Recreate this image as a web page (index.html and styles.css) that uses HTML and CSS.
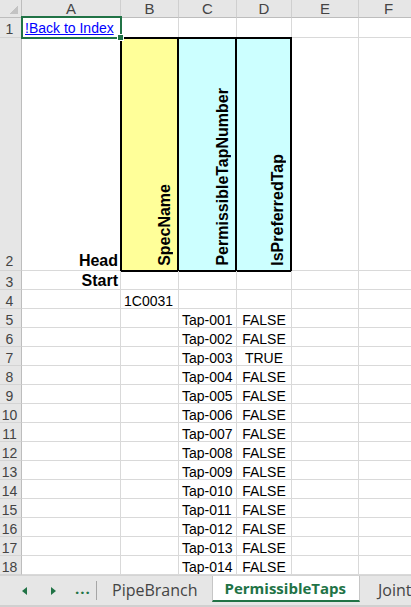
FILE: index.html
```html
<!DOCTYPE html>
<html lang="en">
<head>
  <meta charset="UTF-8">
  <meta name="viewport" content="width=device-width, initial-scale=1.0">
  <title>PermissibleTaps</title>
  <link rel="stylesheet" href="styles.css">
</head>
<body>
  <div class="sheet" id="sheet">
    <div class="corner"><span class="tri"></span></div>
    <div class="colhead">A</div>
    <div class="colhead">B</div>
    <div class="colhead">C</div>
    <div class="colhead">D</div>
    <div class="colhead">E</div>
    <div class="colhead">F</div>

    <div class="rowhead">1</div>
    <div class="cell selected"><a href="#">!Back to Index</a></div>
    <div class="cell"></div>
    <div class="cell"></div>
    <div class="cell"></div>
    <div class="cell"></div>
    <div class="cell"></div>

    <div class="rowhead bottom">2</div>
    <div class="cell label bottom">Head</div>
    <div class="cell hdr first yellow"><span class="vert">SpecName</span></div>
    <div class="cell hdr cyan"><span class="vert">PermissibleTapNumber</span></div>
    <div class="cell hdr cyan"><span class="vert">IsPreferredTap</span></div>
    <div class="cell"></div>
    <div class="cell"></div>

    <div class="rowhead">3</div>
    <div class="cell label">Start</div>
    <div class="cell"></div>
    <div class="cell"></div>
    <div class="cell"></div>
    <div class="cell"></div>
    <div class="cell"></div>

    <div class="rowhead">4</div>
    <div class="cell"></div>
    <div class="cell">1C0031</div>
    <div class="cell"></div>
    <div class="cell"></div>
    <div class="cell"></div>
    <div class="cell"></div>
  </div>

  <div class="tabbar">
    <div class="nav">
      <span class="arrow left"></span>
      <span class="arrow right"></span>
      <span class="dots">...</span>
    </div>
    <div class="tab first">PipeBranch</div>
    <div class="tab active">PermissibleTaps</div>
    <div class="tab last">Joint</div>
  </div>

  <script>
    const sheet = document.getElementById("sheet");
    const preferred = 3;

    for (let i = 1; i <= 14; i++) {
      const cells = [
        { text: String(i + 4), cls: "rowhead" },
        { text: "", cls: "cell" },
        { text: "", cls: "cell" },
        { text: "Tap-" + String(i).padStart(3, "0"), cls: "cell" },
        { text: i === preferred ? "TRUE" : "FALSE", cls: "cell center" },
        { text: "", cls: "cell" },
        { text: "", cls: "cell" }
      ];
      cells.forEach(c => {
        const div = document.createElement("div");
        div.className = c.cls;
        div.textContent = c.text;
        sheet.appendChild(div);
      });
    }
  </script>
</body>
</html>
```

FILE: styles.css
```css
body {
  margin: 0;
  width: 411px;
  height: 607px;
  overflow: hidden;
  background: #fff;
  font-family: "Liberation Sans", Arial, sans-serif;
}

.sheet {
  display: grid;
  grid-template-columns: 22px 99px 58px 58px 55px 67px 60px;
  grid-template-rows: 18px 20px 233px repeat(16, 19px);
  width: 411px;
  height: 575px;
  overflow: hidden;
}

.sheet > div {
  box-sizing: border-box;
  white-space: nowrap;
}

.corner {
  background: #e6e6e6;
  border-right: 1px solid #bdbdbd;
  border-bottom: 1px solid #bdbdbd;
  display: flex;
  justify-content: flex-end;
  align-items: flex-end;
  padding: 0 3px 3px 0;
}

.tri {
  width: 9px;
  height: 9px;
  background: linear-gradient(135deg, transparent 50%, #c3c3c3 50%);
}

.colhead {
  background: #e6e6e6;
  border-right: 1px solid #cfcfcf;
  border-bottom: 1px solid #bdbdbd;
  color: #444;
  font-size: 15px;
  line-height: 18px;
  text-align: center;
}

.rowhead {
  background: #e6e6e6;
  border-right: 1px solid #bdbdbd;
  border-bottom: 1px solid #d4d4d4;
  color: #444;
  font-size: 14px;
  line-height: 18px;
  padding: 2px 2px 0 0;
  text-align: center;
}

.rowhead.bottom {
  display: flex;
  align-items: flex-end;
  justify-content: center;
  padding-top: 0;
}

.cell {
  border-right: 1px solid #d9d9d9;
  border-bottom: 1px solid #d9d9d9;
  font-size: 14px;
  line-height: 18px;
  padding: 2px 3px 0;
  color: #000;
  overflow: hidden;
}

.center {
  text-align: center;
}

.label {
  font-weight: bold;
  font-size: 16px;
  text-align: right;
  padding: 1px 2px 0 0;
}

.label.bottom {
  display: flex;
  align-items: flex-end;
  justify-content: flex-end;
  padding-top: 0;
}

.selected {
  position: relative;
  overflow: visible;
  z-index: 2;
  padding-top: 1px;
}

.selected a {
  color: #0000ff;
  text-decoration: underline;
}

.selected::after {
  content: "";
  position: absolute;
  top: -2px;
  left: -1px;
  right: -2px;
  bottom: -2px;
  border: 2px solid #217346;
}

.selected::before {
  content: "";
  position: absolute;
  right: -4px;
  bottom: -4px;
  width: 5px;
  height: 5px;
  background: #217346;
  border: 1px solid #fff;
  z-index: 3;
}

.hdr {
  border-top: 2px solid #000;
  border-right: 2px solid #000;
  border-bottom: 2px solid #000;
  margin-top: -1px;
  margin-bottom: -1px;
  display: flex;
  justify-content: flex-end;
  align-items: flex-end;
  padding: 0 3px 4px 0;
  overflow: hidden;
}

.hdr.first {
  border-left: 2px solid #000;
  margin-left: -1px;
}

.yellow {
  background: #ffff99;
}

.cyan {
  background: #ccffff;
}

.vert {
  writing-mode: vertical-rl;
  transform: rotate(180deg);
  font-weight: bold;
  font-size: 16px;
  line-height: 18px;
}

.tabbar {
  height: 32px;
  background: #e6e6e6;
  border-top: 1px solid #d4d4d4;
  border-bottom: 2px solid #d0d0d0;
  box-sizing: border-box;
  display: flex;
  align-items: stretch;
  font-family: "Open Sans", "Noto Sans", sans-serif;
  font-size: 16px;
  color: #444;
}

.nav {
  width: 97px;
  flex-shrink: 0;
  display: flex;
  align-items: center;
  padding-left: 22px;
  box-sizing: border-box;
  position: relative;
}

.nav::after {
  content: "";
  position: absolute;
  right: 0;
  top: 5px;
  bottom: 5px;
  width: 1px;
  background: #a6a6a6;
}

.arrow {
  width: 0;
  height: 0;
  border-top: 4px solid transparent;
  border-bottom: 4px solid transparent;
}

.arrow.left {
  border-right: 5px solid #217346;
  margin-right: 24px;
}

.arrow.right {
  border-left: 5px solid #217346;
  margin-right: 19px;
}

.dots {
  color: #217346;
  font-weight: bold;
  font-size: 15px;
  letter-spacing: 1px;
  margin-top: -6px;
}

.tab {
  display: flex;
  align-items: center;
  padding: 0 14px 2px;
  white-space: nowrap;
  flex-shrink: 0;
}

.tab.first {
  padding-left: 15px;
}

.tab.last {
  padding-left: 18px;
}

.tab.active {
  background: #fff;
  color: #217346;
  font-weight: bold;
  font-size: 15px;
  border-left: 1px solid #c6c6c6;
  border-right: 1px solid #c6c6c6;
  border-bottom: 2px solid #217346;
  margin-bottom: 3px;
  padding: 0 13px 0 12px;
}
```
